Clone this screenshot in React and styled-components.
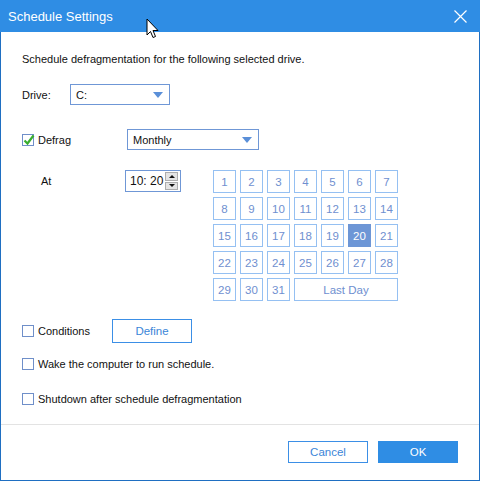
import React from "react";
import styled, { createGlobalStyle } from "styled-components";

const GlobalStyle = createGlobalStyle`
  html, body {
    margin: 0;
    padding: 0;
    background: #ffffff;
  }
  * {
    box-sizing: border-box;
  }
`;

const ACCENT = "#2f8de4";
const FIELD_BORDER = "#6f97d6";
const CELL_BORDER = "#95c0f2";
const CELL_TEXT = "#6f8fd0";

const Window = styled.div`
  position: relative;
  width: 480px;
  height: 481px;
  display: flex;
  flex-direction: column;
  border: 1px solid #1f6fc2;
  border-top: none;
  font-family: "Liberation Sans", Arial, sans-serif;
  font-size: 11px;
  color: #111;
  background: #fff;
`;

const TitleBar = styled.div`
  height: 32px;
  margin: 0 -1px;
  background: ${ACCENT};
  color: #fff;
  display: flex;
  align-items: center;
  justify-content: space-between;
  padding: 0 10px 0 8px;
  font-size: 13px;
`;

const CloseButton = styled.button`
  border: none;
  background: none;
  padding: 0;
  width: 20px;
  height: 20px;
  display: flex;
  align-items: center;
  justify-content: center;
`;

const Body = styled.div`
  flex: 1;
  display: flex;
  flex-direction: column;
  padding: 20px 21px 0;
`;

const Intro = styled.div`
  line-height: 14px;
  height: 14px;
`;

const Row = styled.div`
  display: flex;
  align-items: ${p => p.$align || "center"};
  margin-top: ${p => p.$gap}px;
`;

const Label = styled.span`
  width: ${p => p.$width}px;
  padding-left: ${p => p.$indent || 0}px;
  margin-top: ${p => p.$top || 0}px;
  line-height: 14px;
`;

const Select = styled.div`
  width: ${p => p.$width}px;
  height: 21px;
  border: 1px solid ${FIELD_BORDER};
  display: flex;
  align-items: center;
  justify-content: space-between;
  padding: 0 6px 0 5px;
`;

const Arrow = styled.span`
  width: 0;
  height: 0;
  border-left: 5px solid transparent;
  border-right: 5px solid transparent;
  border-top: 6px solid #5a8fd8;
`;

const Check = styled.span`
  width: 12px;
  height: 12px;
  border: 1px solid #6f8fc9;
  background: #fff;
  position: relative;
  flex: none;
  margin-right: 4px;

  svg {
    position: absolute;
    left: -1px;
    top: -2px;
  }
`;

const CheckRow = styled.label`
  display: flex;
  align-items: center;
  width: ${p => (p.$width ? `${p.$width}px` : "auto")};
  line-height: 14px;
`;

const TimeBox = styled.div`
  width: 56px;
  height: 22px;
  border: 1px solid ${FIELD_BORDER};
  display: flex;
  align-items: center;
  justify-content: space-between;
  padding: 0 2px 0 4px;
  margin-right: 32px;
  flex: none;
  font-size: 12px;
`;

const Spinner = styled.div`
  width: 13px;
  height: 18px;
  display: flex;
  flex-direction: column;
  gap: 1px;
`;

const SpinButton = styled.div`
  flex: 1;
  background: #e4e4e4;
  border: 1px solid #adadad;
  display: flex;
  align-items: center;
  justify-content: center;

  &::after {
    content: "";
    border-left: 3px solid transparent;
    border-right: 3px solid transparent;
    ${p => (p.$down ? "border-top: 3px solid #111;" : "border-bottom: 3px solid #111;")}
  }
`;

const Calendar = styled.div`
  display: grid;
  grid-template-columns: repeat(7, 23px);
  grid-auto-rows: 23px;
  gap: 4px;
`;

const Day = styled.div`
  grid-column: span ${p => p.$span || 1};
  border: ${p => (p.$active ? "none" : `1px solid ${CELL_BORDER}`)};
  background: ${p => (p.$active ? "#6d96d6" : "#fff")};
  color: ${p => (p.$active ? "#fff" : CELL_TEXT)};
  display: flex;
  align-items: center;
  justify-content: center;
  font-size: 11.5px;
`;

const OutlineButton = styled.button`
  width: 80px;
  height: ${p => p.$height || 22}px;
  border: 1px solid #3b8fe6;
  background: #fff;
  color: #3b86d8;
  font-family: inherit;
  font-size: 11.5px;
  padding: 0;
`;

const PrimaryButton = styled.button`
  width: 80px;
  height: 22px;
  border: none;
  background: ${ACCENT};
  color: #fff;
  font-family: inherit;
  font-size: 11.5px;
  padding: 0;
`;

const Footer = styled.div`
  border-top: 1px solid #e3e3e3;
  height: 56px;
  display: flex;
  justify-content: flex-end;
  align-items: flex-start;
  gap: 10px;
  padding: 16px 21px 0 0;
`;

const Cursor = styled.svg`
  position: absolute;
  left: 145px;
  top: 18px;
`;

const CheckMark = () => (
  <svg width="14" height="14" viewBox="0 0 14 14">
    <path d="M2.5 7.5 L5.5 10.5 L11.5 2.5" fill="none" stroke="#3aae2f" strokeWidth="2.2" />
  </svg>
);

const Checkbox = ({ checked }) => <Check>{checked && <CheckMark />}</Check>;

const days = Array.from({ length: 31 }, (_, i) => i + 1);

export default function App() {
  return (
    <>
      <GlobalStyle />
      <Window>
        <TitleBar>
          <span>Schedule Settings</span>
          <CloseButton aria-label="Close">
            <svg width="13" height="13" viewBox="0 0 13 13">
              <path d="M0.5 0.5 L12.5 12.5 M12.5 0.5 L0.5 12.5" stroke="#fff" strokeWidth="1.2" />
            </svg>
          </CloseButton>
        </TitleBar>

        <Body>
          <Intro>Schedule defragmentation for the following selected drive.</Intro>

          <Row $gap={18}>
            <Label $width={48}>Drive:</Label>
            <Select $width={100}>
              <span>C:</span>
              <Arrow />
            </Select>
          </Row>

          <Row $gap={24}>
            <CheckRow $width={105}>
              <Checkbox checked />
              Defrag
            </CheckRow>
            <Select $width={132}>
              <span>Monthly</span>
              <Arrow />
            </Select>
          </Row>

          <Row $gap={20} $align="flex-start">
            <Label $width={103} $indent={19} $top={4}>
              At
            </Label>
            <TimeBox>
              <span>10: 20</span>
              <Spinner>
                <SpinButton />
                <SpinButton $down />
              </Spinner>
            </TimeBox>
            <Calendar>
              {days.map(d => (
                <Day key={d} $active={d === 20}>
                  {d}
                </Day>
              ))}
              <Day $span={4}>Last Day</Day>
            </Calendar>
          </Row>

          <Row $gap={18}>
            <CheckRow $width={90}>
              <Checkbox />
              Conditions
            </CheckRow>
            <OutlineButton $height={24}>Define</OutlineButton>
          </Row>

          <Row $gap={14}>
            <CheckRow>
              <Checkbox />
              Wake the computer to run schedule.
            </CheckRow>
          </Row>

          <Row $gap={21}>
            <CheckRow>
              <Checkbox />
              Shutdown after schedule defragmentation
            </CheckRow>
          </Row>
        </Body>

        <Footer>
          <OutlineButton>Cancel</OutlineButton>
          <PrimaryButton>OK</PrimaryButton>
        </Footer>

        <Cursor width="14" height="22" viewBox="0 0 14 22">
          <path
            d="M1 1 L1 17 L4.5 13.5 L7 19.5 L9.5 18.5 L7 12.5 L12 12.5 Z"
            fill="#fff"
            stroke="#000"
            strokeWidth="1"
            strokeLinejoin="round"
          />
        </Cursor>
      </Window>
    </>
  );
}
